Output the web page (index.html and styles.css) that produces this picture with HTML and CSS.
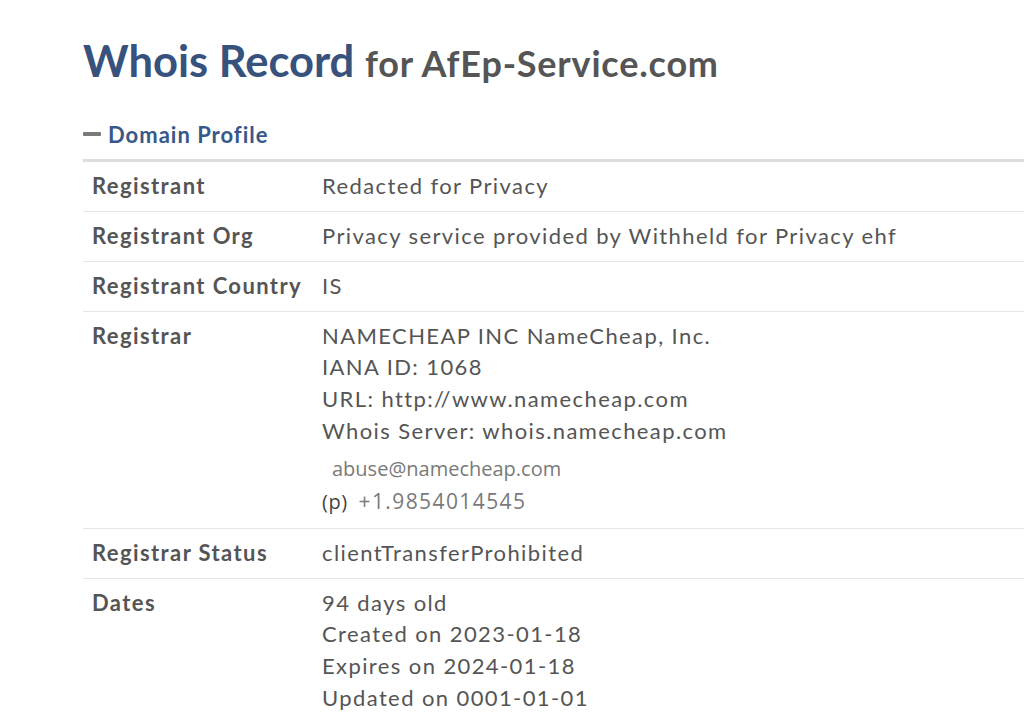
FILE: index.html
```html
<!DOCTYPE html>
<html lang="en">
<head>
<meta charset="utf-8">
<title>Whois Record for AfEp-Service.com</title>
<link rel="stylesheet" href="styles.css">
</head>
<body>
<div class="page">
  <h1 class="title"><span class="title-main">Whois Record</span> <span class="title-sub">for AfEp-Service.com</span></h1>
  <div class="section">
    <h2 class="section-head"><span class="dash"></span>Domain Profile</h2>
    <table class="profile">
      <tr>
        <th>Registrant</th>
        <td>Redacted for Privacy</td>
      </tr>
      <tr>
        <th>Registrant Org</th>
        <td>Privacy service provided by Withheld for Privacy ehf</td>
      </tr>
      <tr>
        <th>Registrant Country</th>
        <td>IS</td>
      </tr>
      <tr>
        <th>Registrar</th>
        <td>
          <div>NAMECHEAP INC NameCheap, Inc.</div>
          <div>IANA ID: 1068</div>
          <div>URL: http://www.namecheap.com</div>
          <div>Whois Server: whois.namecheap.com</div>
          <div class="contact email">abuse@namecheap.com</div>
          <div class="contact phone"><span class="p">(p)</span>+1.9854014545</div>
        </td>
      </tr>
      <tr>
        <th>Registrar Status</th>
        <td>clientTransferProhibited</td>
      </tr>
      <tr>
        <th>Dates</th>
        <td>
          <div>94 days old</div>
          <div>Created on 2023-01-18</div>
          <div>Expires on 2024-01-18</div>
          <div>Updated on 0001-01-01</div>
        </td>
      </tr>
    </table>
  </div>
</div>
</body>
</html>
```
FILE: styles.css
```css
html, body {
  margin: 0;
  padding: 0;
  background: #fff;
  overflow: hidden;
}
body {
  font-family: Lato, "Open Sans", sans-serif;
  color: #555;
}
.page {
  padding: 32px 0 0 83px;
  width: 1100px;
}
.title {
  margin: 0;
  font-weight: 700;
  line-height: 56px;
  white-space: nowrap;
}
.title-main {
  font-size: 43.5px;
  color: #36527d;
}
.title-sub {
  font-size: 36px;
  color: #555;
  letter-spacing: 0.8px;
  margin-left: 3px;
}
.section {
  margin-top: 26px;
}
.section-head {
  margin: 0;
  display: flex;
  align-items: center;
  font-size: 22px;
  font-weight: 700;
  color: #38588a;
  letter-spacing: 1px;
  line-height: 32px;
  padding-bottom: 8px;
  border-bottom: 3px solid #dedede;
}
.dash {
  display: inline-block;
  width: 18px;
  height: 4px;
  border-radius: 1px;
  background: #7a7a7a;
  margin-right: 7px;
  margin-top: -2px;
}
.profile {
  border-collapse: collapse;
  width: 100%;
  font-size: 22px;
  letter-spacing: 1.4px;
}
.profile th, .profile td {
  text-align: left;
  vertical-align: top;
  padding: 7.5px 9px 9.8px 9px;
  line-height: 31.7px;
  border-bottom: 1px solid #e6e6e6;
}
.profile th {
  width: 212px;
  font-weight: 700;
  color: #555;
}
.profile td {
  font-weight: 400;
  color: #555;
}
.contact {
  font-family: "Open Sans", "Noto Sans", sans-serif;
  color: #7a7a7a;
  letter-spacing: 0;
  font-size: 20px;
}
.email {
  padding-left: 10px;
  margin-top: 7px;
  line-height: 32px;
}
.phone {
  font-size: 21px;
  letter-spacing: 1.4px;
  line-height: 32px;
}
.phone .p {
  color: #444;
  font-size: 20px;
  letter-spacing: 0.5px;
  margin-right: 11px;
}
```
